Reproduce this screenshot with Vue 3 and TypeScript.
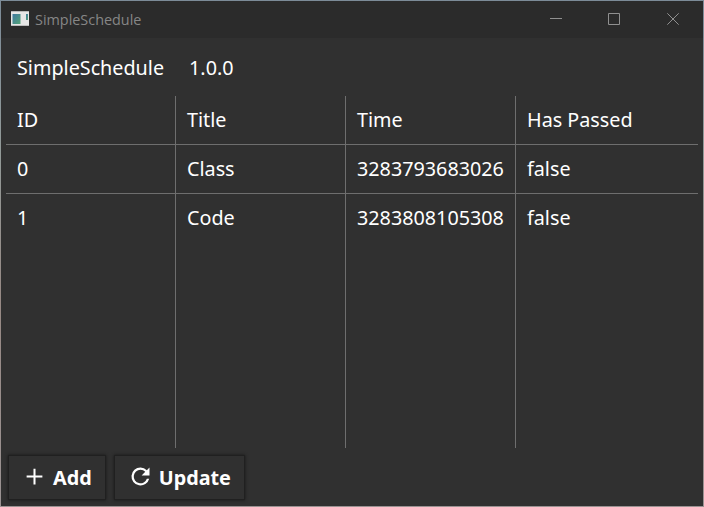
<script setup lang="ts">
interface Entry {
  id: number
  title: string
  time: number
  passed: boolean
}

const headers: string[] = ['ID', 'Title', 'Time', 'Has Passed']
const entries: Entry[] = [
  { id: 0, title: 'Class', time: 3283793683026, passed: false },
  { id: 1, title: 'Code', time: 3283808105308, passed: false },
]
</script>

<template>
  <div class="desktop">
    <div class="window">
      <header class="titlebar">
        <svg class="app-icon" width="18" height="16" viewBox="0 0 18 16">
          <defs>
            <linearGradient id="pane" x1="0" y1="0" x2="1" y2="1">
              <stop offset="0" stop-color="#3f78a0" />
              <stop offset="1" stop-color="#55a578" />
            </linearGradient>
          </defs>
          <rect width="18" height="15" fill="#e6e6e6" />
          <rect width="18" height="1" fill="#b9b9b9" />
          <rect y="14" width="18" height="1" fill="#bcbcbc" />
          <rect x="1.5" y="3" width="8" height="10" fill="url(#pane)" />
          <rect x="15" y="3" width="2" height="6" fill="url(#pane)" />
        </svg>
        <span class="caption">SimpleSchedule</span>
        <div class="controls">
          <svg width="12" height="12" viewBox="0 0 12 12"><path d="M0 5.5H12" /></svg>
          <svg width="12" height="12" viewBox="0 0 12 12"><path d="M.5 .5H11.5V11.5H.5Z" /></svg>
          <svg width="12" height="12" viewBox="0 0 12 12"><path d="M.3 .3L11.7 11.7M11.7 .3L.3 11.7" /></svg>
        </div>
      </header>

      <div class="about">
        <span>SimpleSchedule</span>
        <span>1.0.0</span>
      </div>

      <div class="table">
        <div class="row">
          <div v-for="h in headers" :key="h" class="cell">{{ h }}</div>
        </div>
        <div v-for="e in entries" :key="e.id" class="row">
          <div class="cell">{{ e.id }}</div>
          <div class="cell">{{ e.title }}</div>
          <div class="cell">{{ e.time }}</div>
          <div class="cell">{{ e.passed }}</div>
        </div>
        <div class="row filler">
          <div v-for="h in headers" :key="h" class="cell"></div>
        </div>
      </div>

      <footer class="actions">
        <button class="btn">
          <svg width="27" height="27" viewBox="0 0 24 24"><path d="M19 12.9h-6.1V19h-1.8v-6.1H5v-1.8h6.1V5h1.8v6.1H19z" /></svg>
          <span>Add</span>
        </button>
        <button class="btn">
          <svg width="27" height="27" viewBox="0 0 24 24">
            <path d="M17.65 6.35A7.96 7.96 0 0 0 12 4a8 8 0 1 0 7.73 10h-2.08A6 6 0 1 1 12 6c1.66 0 3.14.69 4.22 1.78L13 11h7V4z" />
          </svg>
          <span>Update</span>
        </button>
      </footer>
    </div>
  </div>
</template>

<style>
body {
  margin: 0;
  background: #303030;
}
</style>

<style scoped>
.desktop {
  box-sizing: border-box;
  width: 704px;
  height: 507px;
  padding: 1px;
  background: linear-gradient(to bottom, #7c8b98 0%, #929a98 30%, #978984 60%, #9a9292 100%);
  font-family: 'Noto Sans', sans-serif;
  color: #fff;
}
.window {
  height: 505px;
  display: flex;
  flex-direction: column;
  background: #303030;
}
.titlebar {
  height: 37px;
  flex: none;
  display: flex;
  align-items: center;
  background: #2b2b2b;
  padding: 0 24px 0 10px;
  color: #868686;
}
.app-icon {
  margin-bottom: 2px;
}
.caption {
  margin: 1px 0 0 6px;
  font-family: 'Open Sans', sans-serif;
  font-size: 14.4px;
  line-height: 20px;
}
.controls {
  margin: 0 1px 1px auto;
  display: flex;
  gap: 46px;
}
.controls svg {
  fill: none;
  stroke: #909090;
}
.controls svg:last-child {
  margin: 0 -1px 0 1px;
}
.about {
  height: 58px;
  flex: none;
  box-sizing: border-box;
  padding: 16px 16px 0;
  display: flex;
  gap: 25px;
  font-size: 19.75px;
  line-height: 28px;
}
.table {
  flex: none;
  height: 352px;
  margin: 0 5px;
  display: flex;
  flex-direction: column;
}
.row {
  height: 49px;
  flex: none;
  box-sizing: border-box;
  display: grid;
  grid-template-columns: 170px 170px 170px 1fr;
  border-bottom: 1px solid #6e6e6e;
}
.row:nth-child(n + 3) {
  border-bottom: 0;
}
.filler {
  height: auto;
  flex: 1;
}
.cell {
  padding: 10px 0 0 11px;
  border-right: 1px solid #6e6e6e;
  font-size: 19.75px;
  line-height: 28px;
  white-space: nowrap;
}
.cell:last-child {
  border-right: 0;
}
.actions {
  display: flex;
  gap: 10px;
  padding: 8px 0 0 8px;
}
.btn {
  height: 43px;
  box-sizing: border-box;
  display: flex;
  align-items: center;
  gap: 4.7px;
  padding: 1px 13px 0 12.3px;
  border: 0;
  background: #303030;
  box-shadow: 0 0 0 1px #202020, 0 0 3px 1px #181818;
  color: #fff;
  font: 700 19.8px/28px 'Noto Sans', sans-serif;
}
.btn svg {
  margin-bottom: 3px;
  fill: #fff;
}
</style>
